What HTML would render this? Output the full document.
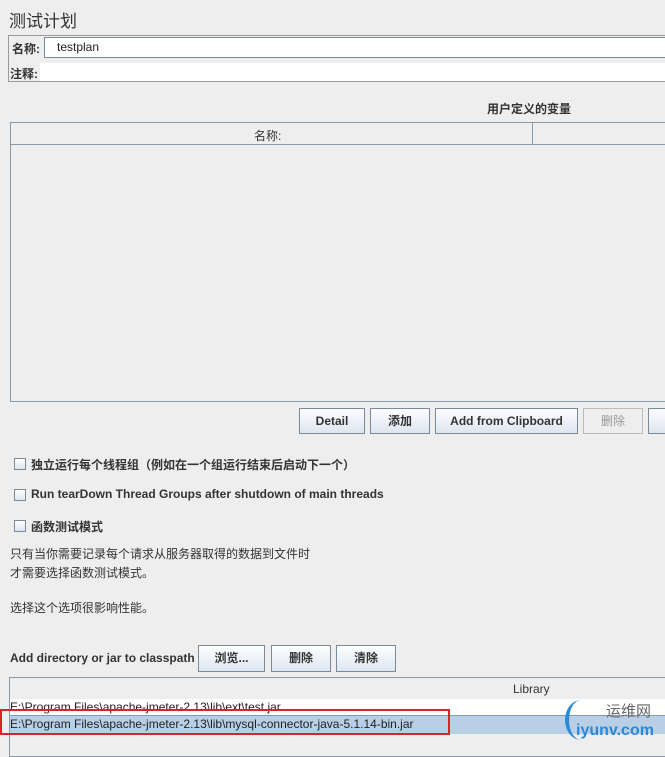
<!DOCTYPE html>
<html><head><meta charset="utf-8"><style>
body{margin:0;width:665px;height:746px;background:#eeeeee;position:relative;overflow:hidden;font-family:"Liberation Sans","Noto Sans CJK SC",sans-serif;font-size:12px;color:#333}
.a{position:absolute;white-space:nowrap}
.b{font-weight:bold}
.btn{position:absolute;height:26px;border:1px solid #7a8a99;background:linear-gradient(#fdfeff,#dde6f0);box-sizing:border-box;text-align:center;line-height:24px;font-weight:bold;color:#333}
.cb{position:absolute;width:12px;height:12px;border:1px solid #7a8a99;background:linear-gradient(#fff,#dce5ee);box-sizing:border-box}
</style></head><body>
<div class="a" style="left:9px;top:7px;font-size:17px;">测试计划</div>
<div class="a" style="left:8px;top:35px;width:660px;height:47px;border:1px solid #9a9a9a;box-sizing:border-box"></div>
<div class="a b" style="left:12px;top:40px">名称:</div>
<div class="a" style="left:44px;top:37px;width:630px;height:21px;background:#fff;border:1px solid #7a8a99;box-sizing:border-box;padding-left:12px;line-height:19px;color:#222">testplan</div>
<div class="a b" style="left:10px;top:65px">注释:</div>
<div class="a" style="left:40px;top:63px;width:630px;height:18px;background:#fff"></div>
<div class="a b" style="left:487px;top:100px">用户定义的变量</div>
<div class="a" style="left:10px;top:122px;width:660px;height:280px;border:1px solid #8a99a8;box-sizing:border-box"></div>
<div class="a" style="left:11px;top:123px;width:654px;height:21px;border-bottom:1px solid #8a99a8"></div>
<div class="a" style="left:532px;top:123px;width:1px;height:21px;background:#8a99a8"></div>
<div class="a" style="left:254px;top:127px">名称:</div>
<div class="btn" style="left:299px;top:408px;width:66px">Detail</div>
<div class="btn" style="left:370px;top:408px;width:60px">添加</div>
<div class="btn" style="left:435px;top:408px;width:143px">Add from Clipboard</div>
<div class="btn" style="left:583px;top:408px;width:60px;background:#eee;border-color:#bbb;color:#999;font-weight:normal">删除</div>
<div class="btn" style="left:648px;top:408px;width:30px"></div>
<div class="cb" style="left:14px;top:458px"></div><div class="a b" style="left:31px;top:456px">独立运行每个线程组（例如在一个组运行结束后启动下一个）</div>
<div class="cb" style="left:14px;top:489px"></div><div class="a b" style="left:31px;top:487px">Run tearDown Thread Groups after shutdown of main threads</div>
<div class="cb" style="left:14px;top:520px"></div><div class="a b" style="left:31px;top:518px">函数测试模式</div>
<div class="a" style="left:10px;top:545px">只有当你需要记录每个请求从服务器取得的数据到文件时</div>
<div class="a" style="left:10px;top:564px">才需要选择函数测试模式。</div>
<div class="a" style="left:10px;top:599px">选择这个选项很影响性能。</div>
<div class="a b" style="left:10px;top:651px">Add directory or jar to classpath</div>
<div class="btn" style="left:198px;top:645px;width:67px;height:27px">浏览...</div>
<div class="btn" style="left:271px;top:645px;width:60px;height:27px">删除</div>
<div class="btn" style="left:336px;top:645px;width:60px;height:27px">清除</div>
<div class="a" style="left:9px;top:677px;width:660px;height:80px;border:1px solid #8a99a8;box-sizing:border-box;background:#eee"></div>
<div class="a" style="left:10px;top:678px;width:655px;height:21px;border-bottom:1px solid #8a99a8"></div>
<div class="a" style="left:513px;top:682px">Library</div>
<div class="a" style="left:10px;top:699px;width:655px;height:16px;background:#fff;line-height:16px;color:#222">E:\Program Files\apache-jmeter-2.13\lib\ext\test.jar</div>
<div class="a" style="left:10px;top:715px;width:655px;height:18px;background:#b8cfe5;border-top:1px solid #7a9cc0;line-height:16px;color:#222">E:\Program Files\apache-jmeter-2.13\lib\mysql-connector-java-5.1.14-bin.jar</div>
<div class="a" style="left:0px;top:709px;width:450px;height:26px;border:2px solid #e0202a;box-sizing:border-box"></div>
<div class="a" style="left:565px;top:700px;width:28px;height:40px;border-left:4px solid #2a8ad8;border-radius:50%"></div>
<div class="a" style="left:606px;top:700px;font-size:15px;color:#666">运维网</div>
<div class="a b" style="left:576px;top:722px;font-size:16px;color:#2a8ad8">iyunv.com</div>
</body></html>
